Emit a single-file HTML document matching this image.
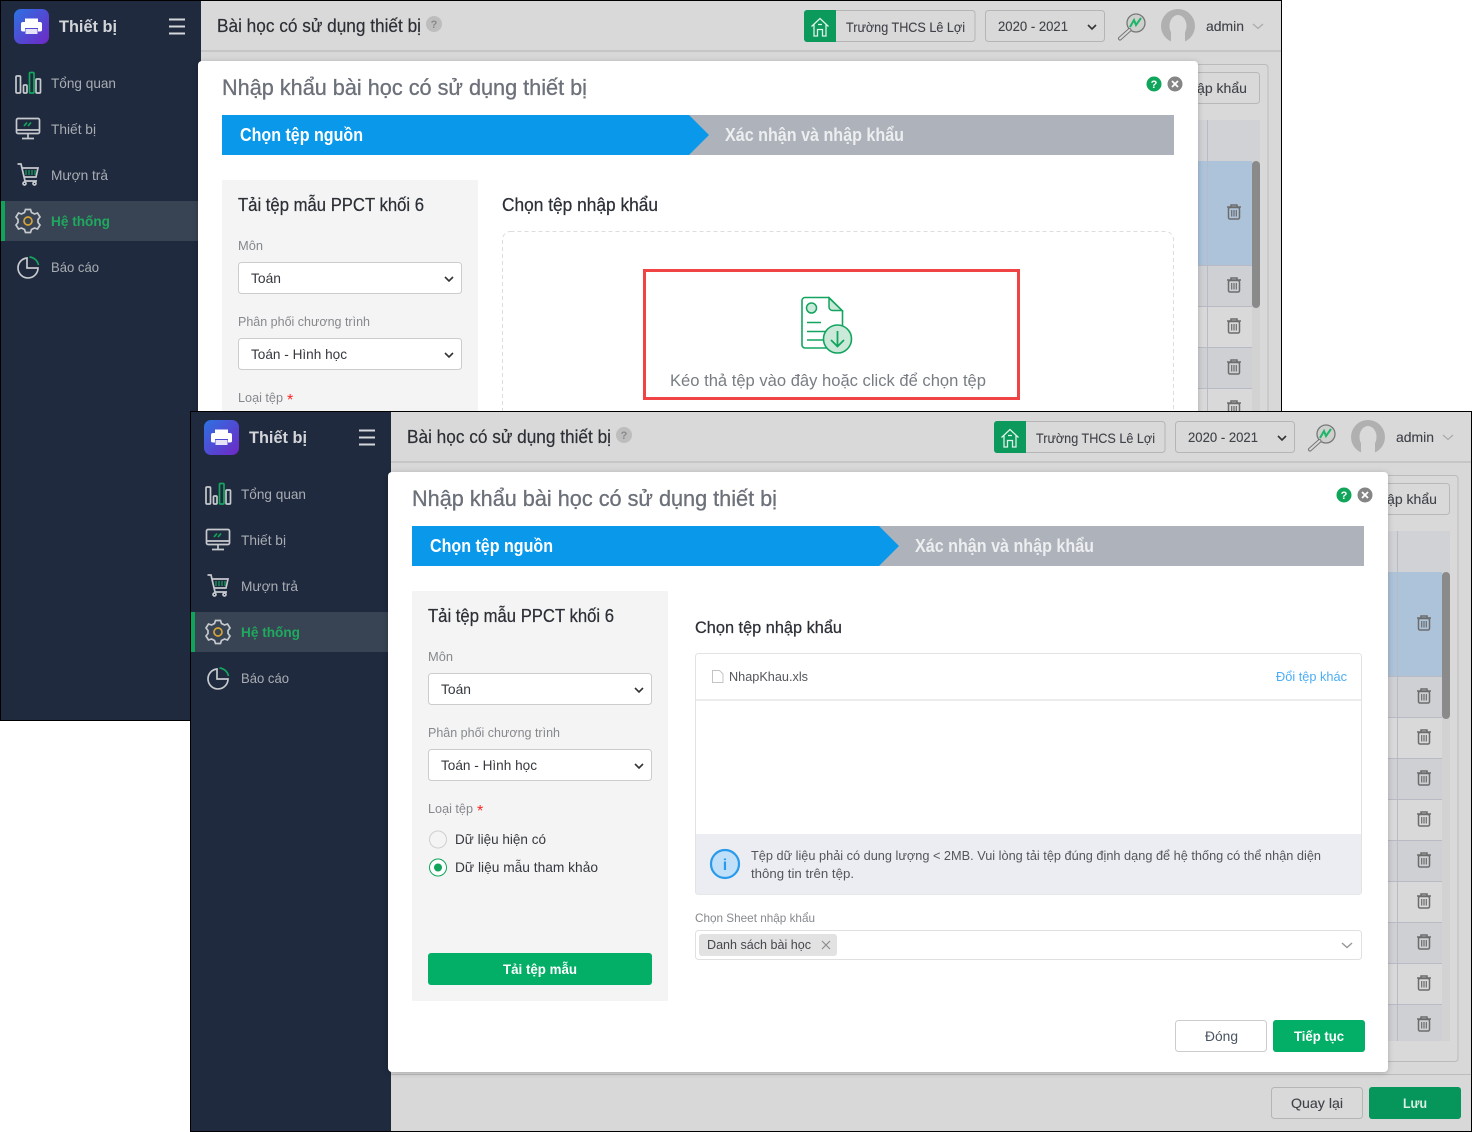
<!DOCTYPE html>
<html lang="vi"><head><meta charset="utf-8"><title>Nhập khẩu bài học</title>
<style>
html,body{margin:0;padding:0;background:#fff;width:1472px;height:1132px;overflow:hidden}
svg{display:block;font-family:"Liberation Sans",sans-serif}
.nav{font-size:14px;fill:#a9adb3}
.brand{font-size:17px;font-weight:bold;fill:#d3d5d9}
.hd{font-size:18px;fill:#2c2f35;stroke:#2c2f35;stroke-width:.2px}
.top{font-size:14px;fill:#3f4248;stroke:#3f4248;stroke-width:.1px}
.mt{font-size:22px;fill:#6c7079;stroke:#6c7079;stroke-width:.3px}
.st{font-size:18px;font-weight:bold;fill:#fff}
.st2{font-size:18px;font-weight:bold;fill:#eceef0}
.h3{font-size:18px;fill:#2c3036;stroke:#2c3036;stroke-width:.25px}
.lb{font-size:13px;fill:#85888d}
.v{font-size:14px;fill:#35383e}
.sm{font-size:13px;fill:#53565c}
.btn{font-size:14px;font-weight:bold;fill:#fff}
.modal{filter:drop-shadow(0 1px 3px rgba(0,0,0,.22))}
</style></head><body>
<svg width="1472" height="1132" viewBox="0 0 1472 1132" xmlns="http://www.w3.org/2000/svg">
<defs>
<linearGradient id="lg" x1="0" y1="0" x2="1" y2="1"><stop offset="0" stop-color="#2d72e2"/><stop offset="1" stop-color="#6f27c6"/></linearGradient>
<g id="trash" fill="none" stroke="#6c6c6c" stroke-width="1.5">
<path d="M-7-5H7M-3-5V-7H3V-5"/><rect x="-5.5" y="-4.5" width="11" height="11.5" rx="1.5"/><path d="M-2.3-2V4.5M0-2V4.5M2.3-2V4.5" stroke-width="1.2"/>
</g>
<path id="chev" d="M-4-2L0 2L4-2" fill="none" stroke="#333" stroke-width="1.6"/>
<g id="shell">
<rect x="0" y="0" width="1282" height="721" fill="#000"/>
<rect x="1" y="1" width="1280" height="719" fill="#d8d8d8"/>
<!-- topbar -->
<rect x="201" y="1" width="1080" height="49" fill="#d9d9d9"/>
<rect x="201" y="50" width="1080" height="2" fill="#c6c6c6"/>
<circle cx="434" cy="24" r="8" fill="#bdbdbd"/>
<rect x="804.500" y="10.500" width="170.500" height="31" rx="3" fill="#d9d9d9" stroke="#b5b5b5"/>
<path d="M807 10H836V42H807a3 3 0 0 1-3-3V13a3 3 0 0 1 3-3z" fill="#0b9a5c"/>
<path d="M811.500 26.500L820 18.500L828.500 26.500M814 24.500V36H817.500V29.500H822.500V36H826V24.500" fill="none" stroke="#dff1e9" stroke-width="1.300"/>
<path d="M818 24.500H822" stroke="#dff1e9" stroke-width="1.300"/>
<rect x="985.500" y="10.500" width="119" height="31" rx="3" fill="#d9d9d9" stroke="#b5b5b5"/>
<use href="#chev" x="1092" y="27"/>
<circle cx="1136" cy="23" r="9" fill="#cdd0cd" stroke="#777" stroke-width="1.300"/>
<path d="M1130 27L1134 20L1136 25L1141 18" fill="none" stroke="#1fb568" stroke-width="2"/>
<path d="M1129.500 30L1120 38.500" stroke="#777" stroke-width="4" stroke-linecap="round"/>
<path d="M1129.500 30L1120 38.500" stroke="#d9d9d9" stroke-width="2" stroke-linecap="round"/>
<circle cx="1178" cy="26" r="17" fill="#b0b0b0"/>
<ellipse cx="1178" cy="26" rx="8.500" ry="11" fill="#d9d9d9"/>
<rect x="1171" y="30" width="14" height="14" fill="#d9d9d9"/>
<path d="M1253 24L1258 28.500L1263 24" fill="none" stroke="#aaa" stroke-width="1.200"/>
<!-- content panel -->
<rect x="1100" y="64.500" width="168" height="586" rx="3" fill="#d9d9d9" stroke="#bbb"/>
<rect x="1100" y="72.500" width="159.500" height="31" rx="3" fill="#d9d9d9" stroke="#b8b8b8"/>
<rect x="1100" y="120" width="160" height="41" fill="#d1d2d6"/>
<rect x="1100" y="161" width="152" height="104" fill="#adc3d9"/>
<rect x="1100" y="265" width="152" height="41" fill="#cfd0d4"/>
<rect x="1100" y="347" width="152" height="41" fill="#cfd0d4"/>
<rect x="1100" y="429" width="152" height="41" fill="#cfd0d4"/>
<rect x="1100" y="511" width="152" height="41" fill="#cfd0d4"/>
<rect x="1100" y="593" width="152" height="37" fill="#cfd0d4"/>
<path d="M1100 265.500H1252M1100 306.500H1252M1100 347.500H1252M1100 388.500H1252M1100 429.500H1252M1100 470.500H1252M1100 511.500H1252M1100 552.500H1252M1100 593.500H1252M1207.500 120V630" stroke="#b8bbc6" fill="none"/>
<rect x="1252" y="161" width="8" height="469" fill="#d2d2d2"/>
<rect x="1252" y="161" width="8" height="147" rx="4" fill="#8a8a8a"/>
<use href="#trash" x="1234" y="212"/><use href="#trash" x="1234" y="285"/><use href="#trash" x="1234" y="326"/><use href="#trash" x="1234" y="367"/><use href="#trash" x="1234" y="408"/><use href="#trash" x="1234" y="449"/><use href="#trash" x="1234" y="490"/><use href="#trash" x="1234" y="531"/><use href="#trash" x="1234" y="572"/><use href="#trash" x="1234" y="613"/>
<!-- bottom bar -->
<rect x="201" y="663" width="1080" height="1" fill="#bcbcbc"/>
<rect x="1081.500" y="676.500" width="91" height="31" rx="3" fill="#d9d9d9" stroke="#b5b5b5"/>
<rect x="1179" y="676" width="92" height="32" rx="3" fill="#06955a"/>
<!-- sidebar -->
<rect x="1" y="1" width="200" height="719" fill="#1f2a3e"/>
<rect x="1" y="201" width="197" height="40" fill="#384453"/>
<rect x="1" y="201" width="4" height="40" fill="#10a35c"/>
<rect x="14" y="9" width="35" height="35" rx="7" fill="url(#lg)"/>
<path d="M25 22V18.500H38V22H40Q42 22 42 24V30Q42 31.500 40 31.500H38V28H25V31.500H23Q21 31.500 21 30V24Q21 22 23 22Z" fill="#fff"/>
<rect x="25.500" y="29" width="12" height="5" fill="#e6e3f8"/>
<path d="M20 0" fill="none"/>
<path d="M169 19.500H185M169 26.500H185M169 33.500H185" stroke="#d5d7da" stroke-width="2"/>
<g fill="none" stroke="#c6c9cd" stroke-width="1.700">
<rect x="16" y="76" width="4.500" height="17" rx="1"/><rect x="23.500" y="85" width="3.500" height="8" rx="1"/><rect x="36" y="79" width="4.500" height="14" rx="1"/>
<rect x="29.500" y="72.500" width="4.500" height="20.500" rx="1" stroke="#14a55e"/>
<rect x="16.500" y="118.500" width="23" height="15" rx="1.500"/><path d="M16.500 130H39.500M28 134V138M22 138.500H34"/>
<path d="M24 126L27 122.500M28 126L31 122.500" stroke="#14a55e"/>
<path d="M17.500 164H21L25 181H37M22 168H38L36 177H24"/><circle cx="24.500" cy="183.500" r="1.500"/><circle cx="34.500" cy="183.500" r="1.500"/>
<path d="M26 170V175M29 170V175M32 170V175M35 170V175" stroke="#14a55e" stroke-width="1.200"/>
<path d="M25.500 209.500L30.500 209.500L31.500 212.500L34.500 214L37.500 213L40 217L38 219.500V222.500L40 225L37.500 229L34.500 228L31.500 229.500L30.500 232.500H25.500L24.500 229.500L21.500 228L18.500 229L16 225L18 222.500V219.500L16 217L18.500 213L21.500 214L24.500 212.500Z"/>
<circle cx="28" cy="221" r="4" stroke="#d6a437" stroke-width="1.700"/>
<path d="M27 258A10 10 0 1 0 38 268H27Z"/>
<path d="M29.500 257A10 10 0 0 1 38.500 265" stroke="#14a55e"/>
</g>
</g>
</defs>

<rect width="1472" height="1132" fill="#fff"/>

<!-- WINDOW 1 -->
<g>
<use href="#shell"/>
<text class="brand" x="59" y="32" textLength="58" lengthAdjust="spacingAndGlyphs">Thiết bị</text>
<text class="nav" x="51" y="88" textLength="65" lengthAdjust="spacingAndGlyphs">Tổng quan</text>
<text class="nav" x="51" y="134" textLength="45" lengthAdjust="spacingAndGlyphs">Thiết bị</text>
<text class="nav" x="51" y="180" textLength="57" lengthAdjust="spacingAndGlyphs">Mượn trả</text>
<text class="nav" x="51" y="226" textLength="59" lengthAdjust="spacingAndGlyphs" style="fill:#1fa95f;font-weight:bold">Hệ thống</text>
<text class="nav" x="51" y="272" textLength="48" lengthAdjust="spacingAndGlyphs">Báo cáo</text>
<text class="hd" x="217" y="32" textLength="204" lengthAdjust="spacingAndGlyphs">Bài học có sử dụng thiết bị</text>
<text x="434" y="28" font-size="11" text-anchor="middle" fill="#8a8a8a" font-weight="bold">?</text>
<text class="top" x="846" y="32" textLength="119" lengthAdjust="spacingAndGlyphs">Trường THCS Lê Lợi</text>
<text class="top" x="998" y="31" textLength="70" lengthAdjust="spacingAndGlyphs">2020 - 2021</text>
<text class="top" x="1206" y="31" textLength="38" lengthAdjust="spacingAndGlyphs">admin</text>
<text class="top" x="1197" y="93" textLength="50" lengthAdjust="spacingAndGlyphs">ập khẩu</text>
<!-- modal -->
<rect class="modal" x="198" y="61" width="1000" height="600" rx="4" fill="#fff"/>
<text class="mt" x="222" y="95" textLength="365" lengthAdjust="spacingAndGlyphs">Nhập khẩu bài học có sử dụng thiết bị</text>
<circle cx="1154" cy="84" r="7.500" fill="#0fa55a"/><text x="1154" y="88" font-size="11" font-weight="bold" fill="#fff" text-anchor="middle">?</text>
<circle cx="1175" cy="84" r="7.500" fill="#858585"/><path d="M1172 81L1178 87M1178 81L1172 87" stroke="#fff" stroke-width="1.800"/>
<rect x="222" y="115" width="952" height="40" fill="#aeb2ba"/>
<path d="M222 115H689L709 135L689 155H222Z" fill="#0a98ea"/>
<text class="st" x="240" y="141" textLength="123" lengthAdjust="spacingAndGlyphs">Chọn tệp nguồn</text>
<text class="st2" x="725" y="141" textLength="179" lengthAdjust="spacingAndGlyphs">Xác nhận và nhập khẩu</text>
<rect x="222" y="180" width="256" height="410" fill="#f4f4f4"/>
<text class="h3" x="238" y="211" textLength="186" lengthAdjust="spacingAndGlyphs">Tải tệp mẫu PPCT khối 6</text>
<text class="lb" x="238" y="250" textLength="25" lengthAdjust="spacingAndGlyphs">Môn</text>
<rect x="238.500" y="262.500" width="223" height="31" rx="3" fill="#fff" stroke="#ccc"/>
<text class="v" x="251" y="283" textLength="30" lengthAdjust="spacingAndGlyphs">Toán</text>
<use href="#chev" x="449" y="279"/>
<text class="lb" x="238" y="326" textLength="132" lengthAdjust="spacingAndGlyphs">Phân phối chương trình</text>
<rect x="238.500" y="338.500" width="223" height="31" rx="3" fill="#fff" stroke="#ccc"/>
<text class="v" x="251" y="359" textLength="96" lengthAdjust="spacingAndGlyphs">Toán - Hình học</text>
<use href="#chev" x="449" y="355"/>
<text class="lb" x="238" y="402" textLength="45" lengthAdjust="spacingAndGlyphs">Loại tệp</text>
<text x="287" y="405" font-size="16" fill="#f22">*</text>
<text class="h3" x="502" y="211" textLength="156" lengthAdjust="spacingAndGlyphs">Chọn tệp nhập khẩu</text>
<rect x="502.500" y="231.500" width="671" height="300" rx="8" fill="#fff" stroke="#ddd" stroke-dasharray="4 3"/>
<rect x="644.500" y="270.500" width="374" height="128" fill="none" stroke="#f04444" stroke-width="3"/>
<path d="M805 297.500H829L842.500 311V345A3 3 0 0 1 839.500 348H805A3 3 0 0 1 802 345V300.500A3 3 0 0 1 805 297.500Z" fill="#fff" stroke="#13a560" stroke-width="1.600"/>
<path d="M829 298V307A3.500 3.500 0 0 0 832.500 310.500H842Z" fill="#cbe9d8" stroke="#13a560" stroke-width="1.500"/>
<circle cx="811.500" cy="308" r="5" fill="#cbe9d8" stroke="#13a560" stroke-width="1.500"/>
<path d="M807 322.500H821M807 331.500H825M807 340H825" stroke="#13a560" stroke-width="1.600"/>
<circle cx="837.500" cy="339" r="14" fill="#cbe9d8" stroke="#13a560" stroke-width="1.600"/>
<path d="M837.500 331V346M831 340L837.500 346.500L844 340" fill="none" stroke="#13a560" stroke-width="1.800"/>
<text x="670" y="386" font-size="17" fill="#787d83" textLength="316" lengthAdjust="spacingAndGlyphs">Kéo thả tệp vào đây hoặc click để chọn tệp</text>
</g>

<!-- WINDOW 2 -->
<g transform="translate(190,411)">
<use href="#shell"/>
<text class="brand" x="59" y="32" textLength="58" lengthAdjust="spacingAndGlyphs">Thiết bị</text>
<text class="nav" x="51" y="88" textLength="65" lengthAdjust="spacingAndGlyphs">Tổng quan</text>
<text class="nav" x="51" y="134" textLength="45" lengthAdjust="spacingAndGlyphs">Thiết bị</text>
<text class="nav" x="51" y="180" textLength="57" lengthAdjust="spacingAndGlyphs">Mượn trả</text>
<text class="nav" x="51" y="226" textLength="59" lengthAdjust="spacingAndGlyphs" style="fill:#1fa95f;font-weight:bold">Hệ thống</text>
<text class="nav" x="51" y="272" textLength="48" lengthAdjust="spacingAndGlyphs">Báo cáo</text>
<text class="hd" x="217" y="32" textLength="204" lengthAdjust="spacingAndGlyphs">Bài học có sử dụng thiết bị</text>
<text x="434" y="28" font-size="11" text-anchor="middle" fill="#8a8a8a" font-weight="bold">?</text>
<text class="top" x="846" y="32" textLength="119" lengthAdjust="spacingAndGlyphs">Trường THCS Lê Lợi</text>
<text class="top" x="998" y="31" textLength="70" lengthAdjust="spacingAndGlyphs">2020 - 2021</text>
<text class="top" x="1206" y="31" textLength="38" lengthAdjust="spacingAndGlyphs">admin</text>
<text class="top" x="1197" y="93" textLength="50" lengthAdjust="spacingAndGlyphs">ập khẩu</text>
<text class="top" x="1101" y="697" textLength="52" lengthAdjust="spacingAndGlyphs">Quay lại</text>
<text class="btn" x="1213" y="697" textLength="24" lengthAdjust="spacingAndGlyphs" style="fill:#dcefe6">Lưu</text>
<!-- modal -->
<rect class="modal" x="198" y="61" width="1000" height="600" rx="4" fill="#fff"/>
<text class="mt" x="222" y="95" textLength="365" lengthAdjust="spacingAndGlyphs">Nhập khẩu bài học có sử dụng thiết bị</text>
<circle cx="1154" cy="84" r="7.500" fill="#0fa55a"/><text x="1154" y="88" font-size="11" font-weight="bold" fill="#fff" text-anchor="middle">?</text>
<circle cx="1175" cy="84" r="7.500" fill="#858585"/><path d="M1172 81L1178 87M1178 81L1172 87" stroke="#fff" stroke-width="1.800"/>
<rect x="222" y="115" width="952" height="40" fill="#aeb2ba"/>
<path d="M222 115H689L709 135L689 155H222Z" fill="#0a98ea"/>
<text class="st" x="240" y="141" textLength="123" lengthAdjust="spacingAndGlyphs">Chọn tệp nguồn</text>
<text class="st2" x="725" y="141" textLength="179" lengthAdjust="spacingAndGlyphs">Xác nhận và nhập khẩu</text>
<rect x="222" y="180" width="256" height="410" fill="#f4f4f4"/>
<text class="h3" x="238" y="211" textLength="186" lengthAdjust="spacingAndGlyphs">Tải tệp mẫu PPCT khối 6</text>
<text class="lb" x="238" y="250" textLength="25" lengthAdjust="spacingAndGlyphs">Môn</text>
<rect x="238.500" y="262.500" width="223" height="31" rx="3" fill="#fff" stroke="#ccc"/>
<text class="v" x="251" y="283" textLength="30" lengthAdjust="spacingAndGlyphs">Toán</text>
<use href="#chev" x="449" y="279"/>
<text class="lb" x="238" y="326" textLength="132" lengthAdjust="spacingAndGlyphs">Phân phối chương trình</text>
<rect x="238.500" y="338.500" width="223" height="31" rx="3" fill="#fff" stroke="#ccc"/>
<text class="v" x="251" y="359" textLength="96" lengthAdjust="spacingAndGlyphs">Toán - Hình học</text>
<use href="#chev" x="449" y="355"/>
<text class="lb" x="238" y="402" textLength="45" lengthAdjust="spacingAndGlyphs">Loại tệp</text>
<text x="287" y="405" font-size="16" fill="#f22">*</text>
<circle cx="248" cy="428.500" r="8.500" fill="#f4f4f4" stroke="#cfcfcf"/>
<text class="v" x="265" y="433" textLength="91" lengthAdjust="spacingAndGlyphs">Dữ liệu hiện có</text>
<circle cx="248" cy="456.500" r="8.500" fill="#fff" stroke="#0fa55a"/><circle cx="248" cy="456.500" r="4" fill="#0fa55a"/>
<text class="v" x="265" y="461" textLength="143" lengthAdjust="spacingAndGlyphs">Dữ liệu mẫu tham khảo</text>
<rect x="238" y="542" width="224" height="32" rx="3" fill="#03ae67"/>
<text class="btn" x="313" y="563" textLength="74" lengthAdjust="spacingAndGlyphs">Tải tệp mẫu</text>
<text class="h3" x="505" y="222" textLength="147" lengthAdjust="spacingAndGlyphs" style="font-size:17px">Chọn tệp nhập khẩu</text>
<rect x="505.500" y="242.500" width="666" height="241" rx="3" fill="#fff" stroke="#e3e3e3"/>
<path d="M522.500 259.500H529.500L533 263V271.500H522.500Z" fill="#fff" stroke="#c4c4c4"/>
<text class="sm" x="539" y="270" textLength="79" lengthAdjust="spacingAndGlyphs">NhapKhau.xls</text>
<text class="sm" x="1086" y="270" textLength="71" lengthAdjust="spacingAndGlyphs" style="fill:#4baef5">Đổi tệp khác</text>
<rect x="506" y="288" width="665" height="2" fill="#ececec"/>
<path d="M506 423H1171V481A2.500 2.500 0 0 1 1168.500 483.500H508.500A2.500 2.500 0 0 1 506 481Z" fill="#ebedf2"/>
<circle cx="535" cy="453" r="14" fill="#bfe0f8" stroke="#2a9bea" stroke-width="2.200"/>
<text x="535" y="459" font-size="16" font-weight="bold" fill="#2a9bea" text-anchor="middle">i</text>
<text class="sm" x="561" y="449" textLength="570" lengthAdjust="spacingAndGlyphs">Tệp dữ liệu phải có dung lượng &lt; 2MB. Vui lòng tải tệp đúng định dạng để hệ thống có thể nhận diện</text>
<text class="sm" x="561" y="467" textLength="103" lengthAdjust="spacingAndGlyphs">thông tin trên tệp.</text>
<text class="lb" x="505" y="511" textLength="120" lengthAdjust="spacingAndGlyphs" style="font-size:12px">Chọn Sheet nhập khẩu</text>
<rect x="505.500" y="519.500" width="666" height="29" rx="3" fill="#fff" stroke="#e0e0e0"/>
<rect x="509" y="523" width="138" height="22" rx="3" fill="#e2e2e2"/>
<text class="sm" x="517" y="538" textLength="104" lengthAdjust="spacingAndGlyphs" style="fill:#44474d">Danh sách bài học</text>
<path d="M632 530L640 538M640 530L632 538" stroke="#8d8d8d" stroke-width="1.200"/>
<path d="M1152 532L1157 536.500L1162 532" fill="none" stroke="#9a9a9a" stroke-width="1.500"/>
<rect x="985.500" y="609.500" width="91" height="31" rx="3" fill="#fff" stroke="#ccc"/>
<text class="v" x="1015" y="630" textLength="33" lengthAdjust="spacingAndGlyphs" style="fill:#4a5462">Đóng</text>
<rect x="1083" y="609" width="92" height="32" rx="3" fill="#03ae67"/>
<text class="btn" x="1104" y="630" textLength="50" lengthAdjust="spacingAndGlyphs">Tiếp tục</text>
</g>
</svg>
</body></html>
